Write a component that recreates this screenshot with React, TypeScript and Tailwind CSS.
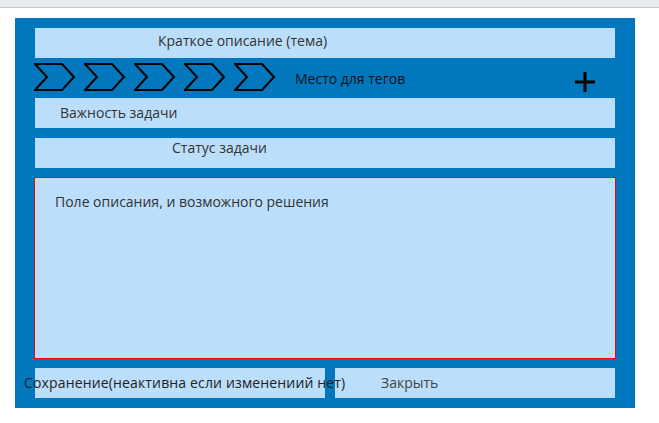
import React from "react";

function Chevron() {
  return (
    <svg width="42" height="28" viewBox="0 0 42 28" className="shrink-0">
      <path d="M1 1 H28 L40 14 L28 27 H1 L13 14 Z" fill="none" stroke="#000" strokeWidth="2" strokeLinejoin="miter" />
    </svg>
  );
}

export default function App() {
  const font = { fontFamily: '"Open Sans", "Noto Sans", sans-serif' };
  return (
    <div className="w-[659px] h-[423px] bg-white text-[14px] leading-[18px] text-[#222]" style={font}>
      <div className="h-[8px] bg-[#e9ecef] border-b border-[#c4c7ca]" />
      <div className="ml-[15px] mt-[10px] w-[620px] h-[390px] bg-[#0277bd] px-[20px] pt-[10px] flex flex-col">
        <div className="h-[30px] bg-[#bbdefb] pt-[4px] pl-[123px] text-[#333]">Краткое описание (тема)</div>
        <div className="h-[40px] flex items-start">
          <div className="flex gap-[8px] mt-[5px] -ml-[1px]">
            <Chevron />
            <Chevron />
            <Chevron />
            <Chevron />
            <Chevron />
          </div>
          <div className="ml-[19px] mt-[12px] text-[#111]">Место для тегов</div>
          <svg width="22" height="22" viewBox="0 0 22 22" className="ml-auto mr-[19px] mt-[13px]">
            <path d="M11 1 V21 M1 11 H21" stroke="#000" strokeWidth="3" />
          </svg>
        </div>
        <div className="h-[30px] bg-[#bbdefb] pt-[6px] pl-[25px] text-[#333]">Важность задачи</div>
        <div className="h-[30px] bg-[#bbdefb] mt-[10px] pt-[1px] pl-[137px] text-[#333]">Статус задачи</div>
        <div className="h-[182px] mt-[9px] -mx-px bg-[#bbdefb] border border-[#ff0000] pt-[15px] pl-[20px] text-[#333]">
          Поле описания, и возможного решения
        </div>
        <div className="h-[30px] mt-[9px] flex gap-[10px]">
          <div className="relative z-10 w-[290px] bg-[#bbdefb] pt-[6px] whitespace-nowrap">
            <span className="ml-[-11px] text-[#222] tracking-[0.15px]">Сохранение(неактивна если изменениий нет)</span>
          </div>
          <div className="w-[280px] bg-[#bbdefb] pt-[6px] pl-[46px] text-[#444]">Закрыть</div>
        </div>
      </div>
    </div>
  );
}
